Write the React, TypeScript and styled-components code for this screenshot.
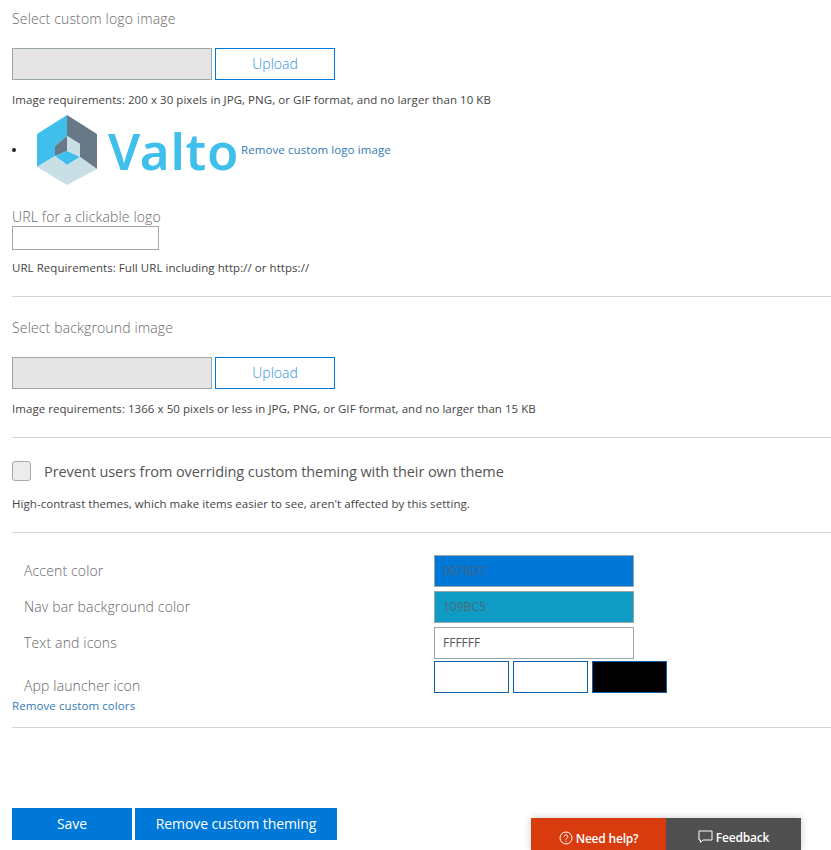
import styled, { createGlobalStyle } from "styled-components";

const GlobalStyle = createGlobalStyle`
    html, body {
        margin: 0;
        padding: 0;
        background: #fff;
        height: 850px;
        overflow: hidden;
    }
    body {
        font-family: "Open Sans", "Noto Sans", sans-serif;
    }
`;

const Page = styled.div`
    display: flow-root;
    padding: 0 0 0 12px;
    position: relative;
    height: 850px;
    box-sizing: border-box;
`;

const Heading = styled.div<{ $top?: number }>`
    margin-top: ${(p) => p.$top ?? 0}px;
    font-size: 14px;
    font-weight: 300;
    line-height: 20px;
    color: #666;
    letter-spacing: 0.15px;
`;

const UploadRow = styled.div`
    display: flex;
    gap: 3px;
    margin-top: 19px;
`;

const FileBox = styled.div`
    box-sizing: border-box;
    width: 200px;
    height: 32px;
    background: #e5e5e5;
    border: 1px solid #9aa7a8;
`;

const UploadButton = styled.button`
    box-sizing: border-box;
    width: 120px;
    height: 32px;
    background: #fff;
    border: 1px solid #0078d7;
    color: #2f93e0;
    font: 300 14px "Open Sans", sans-serif;
    padding: 0 0 2px;
`;

const Note = styled.div<{ $top: number }>`
    margin-top: ${(p) => p.$top}px;
    font-size: 11.5px;
    line-height: 16px;
    color: #444;
    letter-spacing: 0.05px;
`;

const LogoRow = styled.div`
    display: flex;
    align-items: center;
    height: 72px;
    margin-top: 6px;
`;

const Bullet = styled.span`
    width: 4px;
    height: 4px;
    border-radius: 50%;
    background: #222;
    margin-right: 21px;
`;

const Logo = styled.div`
    display: flex;
    align-items: center;
    width: 204px;
    height: 72px;
`;

const LogoName = styled.span`
    font: 600 51px/72px "Noto Sans", sans-serif;
    color: #3fbfec;
    margin-left: 10px;
    letter-spacing: 0.7px;
`;

const TextLink = styled.a`
    font-size: 11.5px;
    line-height: 16px;
    color: #337ab7;
    letter-spacing: 0.09px;
`;

const ColorsLink = styled(TextLink)`
    display: block;
    margin-top: 5px;
`;

const UrlLabel = styled(Heading)`
    line-height: 19px;
`;

const UrlInput = styled.div`
    box-sizing: border-box;
    width: 147px;
    height: 24px;
    border: 1px solid #a6a6a6;
    background: #fff;
`;

const Divider = styled.div<{ $top: number }>`
    margin-top: ${(p) => p.$top}px;
    height: 1px;
    background: #d4d4d4;
`;

const CheckRow = styled.div`
    display: flex;
    align-items: center;
    gap: 13px;
    margin-top: 23px;
    height: 20px;
`;

const CheckBox = styled.span`
    box-sizing: border-box;
    width: 19px;
    height: 20px;
    border: 1px solid #a9a9a9;
    border-radius: 3px;
    background: #ececec;
`;

const CheckLabel = styled.span`
    padding-top: 2px;
    font-size: 14.5px;
    line-height: 20px;
    color: #555;
    letter-spacing: -0.07px;
`;

const ColorGrid = styled.div`
    margin-top: 22px;
    display: flex;
    flex-direction: column;
    gap: 4px;
`;

const ColorRow = styled.div`
    display: flex;
    align-items: center;
    height: 32px;
`;

const ColorLabel = styled(Heading)`
    width: 410px;
    margin-left: 12px;
    flex: none;
`;

const ColorInput = styled.div<{ $bg: string; $fg: string }>`
    box-sizing: border-box;
    width: 200px;
    height: 32px;
    padding-left: 8px;
    background: ${(p) => p.$bg};
    color: ${(p) => p.$fg};
    border: 1px solid #9aa7a8;
    font-size: 12px;
    line-height: 30px;
`;

const LauncherRow = styled.div`
    display: flex;
    height: 32px;
    margin-top: 2px;
`;

const LauncherLabel = styled(ColorLabel)`
    padding-top: 15px;
`;

const Swatches = styled.div`
    display: flex;
    gap: 4px;
`;

const Swatch = styled.div<{ $bg: string }>`
    box-sizing: border-box;
    width: 75px;
    height: 32px;
    background: ${(p) => p.$bg};
    border: 1px solid #0f5fa8;
`;

const ActionRow = styled.div`
    display: flex;
    gap: 3px;
    margin-top: 80px;
`;

const ActionButton = styled.button<{ $wide?: boolean }>`
    box-sizing: border-box;
    width: ${(p) => (p.$wide ? 202 : 120)}px;
    height: 32px;
    padding: 0 0 2px;
    background: #0078d7;
    color: #fff;
    border: none;
    font: 400 14px "Open Sans", sans-serif;
    letter-spacing: -0.1px;
`;

const HelpDock = styled.div`
    position: absolute;
    left: 531px;
    top: 818px;
    display: flex;
    height: 32px;
    box-shadow: 0 0 8px rgba(0, 0, 0, 0.2);
`;

const DockButton = styled.div<{ $bg: string; $shift: number }>`
    display: flex;
    align-items: center;
    justify-content: center;
    gap: 3px;
    box-sizing: border-box;
    width: 135px;
    padding-top: ${(p) => p.$shift}px;
    background: ${(p) => p.$bg};
    color: #fff;
    font-size: 12px;
    font-weight: 600;
    letter-spacing: -0.2px;
`;

const HelpIcon = () => (
    <svg width="14" height="14" viewBox="0 0 14 14" fill="none" stroke="#fff" strokeWidth="1">
        <circle cx="7" cy="7" r="6" />
        <path d="M5.2 5.6a1.8 1.8 0 1 1 2.8 1.5c-.7.4-1 .8-1 1.5" />
        <path d="M7 9.8v1" />
    </svg>
);

const FeedbackIcon = () => (
    <svg width="15" height="14" viewBox="0 0 15 14" fill="none" stroke="#fff" strokeWidth="1">
        <path d="M1 1h13v9H5l-2.500 2.500V10H1z" />
    </svg>
);

const LogoMark = () => (
    <svg width="61" height="70" viewBox="0 0 61 70">
        <path d="M30 0L0 19V52L18 41V31L30 21z" fill="#3fbfec" />
        <path d="M30 0L60 19V54L43 42V29L30 21z" fill="#687886" />
        <path d="M30 21L18 31V41L30 36z" fill="#687886" />
        <path d="M30 21L43 29V42L30 36z" fill="#c9dfe6" />
        <path d="M30 36L18 41L30 50L43 42z" fill="#3fbfec" />
        <path d="M0 52L18 41L30 50L43 42L60 54L30 70z" fill="#c9dfe6" />
    </svg>
);

const App = () => {
    return (
        <Page>
            <GlobalStyle />
            <Heading $top={9}>Select custom logo image</Heading>
            <UploadRow>
                <FileBox />
                <UploadButton>Upload</UploadButton>
            </UploadRow>
            <Note $top={12}>Image requirements: 200 x 30 pixels in JPG, PNG, or GIF format, and no larger than 10 KB</Note>
            <LogoRow>
                <Bullet />
                <Logo>
                    <LogoMark />
                    <LogoName>Valto</LogoName>
                </Logo>
                <TextLink>Remove custom logo image</TextLink>
            </LogoRow>
            <UrlLabel $top={21}>URL for a clickable logo</UrlLabel>
            <UrlInput />
            <Note $top={10}>URL Requirements: Full URL including http:// or https://</Note>
            <Divider $top={20} />
            <Heading $top={21}>Select background image</Heading>
            <UploadRow>
                <FileBox />
                <UploadButton>Upload</UploadButton>
            </UploadRow>
            <Note $top={12}>Image requirements: 1366 x 50 pixels or less in JPG, PNG, or GIF format, and no larger than 15 KB</Note>
            <Divider $top={20} />
            <CheckRow>
                <CheckBox />
                <CheckLabel>Prevent users from overriding custom theming with their own theme</CheckLabel>
            </CheckRow>
            <Note $top={15}>High-contrast themes, which make items easier to see, aren't affected by this setting.</Note>
            <Divider $top={20} />
            <ColorGrid>
                <ColorRow>
                    <ColorLabel>Accent color</ColorLabel>
                    <ColorInput $bg="#0078d7" $fg="#44617a">0078D7</ColorInput>
                </ColorRow>
                <ColorRow>
                    <ColorLabel>Nav bar background color</ColorLabel>
                    <ColorInput $bg="#109bc5" $fg="#4a6a78">109BC5</ColorInput>
                </ColorRow>
                <ColorRow>
                    <ColorLabel>Text and icons</ColorLabel>
                    <ColorInput $bg="#ffffff" $fg="#555">FFFFFF</ColorInput>
                </ColorRow>
            </ColorGrid>
            <LauncherRow>
                <LauncherLabel>App launcher icon</LauncherLabel>
                <Swatches>
                    <Swatch $bg="#fff" />
                    <Swatch $bg="#fff" />
                    <Swatch $bg="#000" />
                </Swatches>
            </LauncherRow>
            <ColorsLink>Remove custom colors</ColorsLink>
            <Divider $top={13} />
            <ActionRow>
                <ActionButton>Save</ActionButton>
                <ActionButton $wide>Remove custom theming</ActionButton>
            </ActionRow>
            <HelpDock>
                <DockButton $bg="#d83b0e" $shift={8}>
                    <HelpIcon />
                    Need help?
                </DockButton>
                <DockButton $bg="#505050" $shift={6}>
                    <FeedbackIcon />
                    Feedback
                </DockButton>
            </HelpDock>
        </Page>
    );
};

export default App;
